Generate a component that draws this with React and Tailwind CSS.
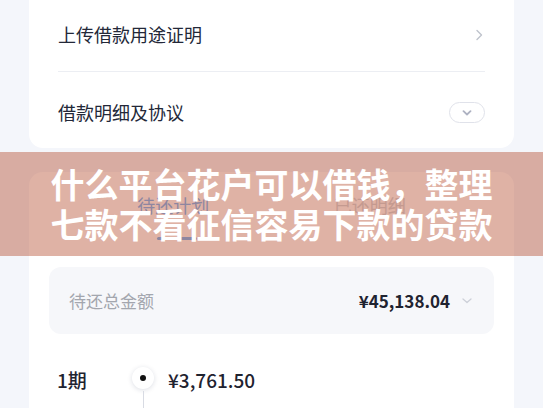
export default function App() {
  return (
    <div className="relative w-full h-[408px] overflow-hidden bg-[#f4f6fb] px-[29px] font-['Noto_Sans_CJK_SC','Noto_Sans',sans-serif]">
      {/* 上方卡片 */}
      <div className="bg-white rounded-b-[14px] px-[29px]">
        <div className="h-[71px] flex items-center justify-between pb-[2px]">
          <span className="text-[18px] text-[#232838]">上传借款用途证明</span>
          <svg width="8" height="12" viewBox="0 0 8 12" className="mr-[2px]">
            <path d="M2 1.5 L6.5 6 L2 10.5" fill="none" stroke="#bfc3cc" strokeWidth="1.4" strokeLinecap="round" strokeLinejoin="round" />
          </svg>
        </div>
        <div className="h-px bg-[#eceef3]" />
        <div className="h-[76px] flex items-center justify-between pt-[5px]">
          <span className="text-[18px] text-[#232838]">借款明细及协议</span>
          <div className="w-[36px] h-[21px] rounded-full border border-[#e0e2ea] flex items-center justify-center">
            <svg width="10" height="6" viewBox="0 0 10 6">
              <path d="M1.5 1.2 L5 4.5 L8.5 1.2" fill="none" stroke="#aeb2c2" strokeWidth="1.8" strokeLinecap="round" strokeLinejoin="round" />
            </svg>
          </div>
        </div>
      </div>

      {/* 还款计划卡片 */}
      <div className="mt-[24px] bg-white rounded-t-[14px] h-[300px]">
        <div className="flex px-[46px] pt-[20px]">
          <div className="flex-1 flex flex-col items-center">
            <span className="text-[18px] leading-[26px] text-[#78b6f7]">待还计划</span>
            <div className="mt-[19px] ml-[8px] w-[40px] h-[3px] rounded-full bg-[#78b6f7]" />
          </div>
          <div className="flex-1 flex flex-col items-center">
            <span className="text-[18px] leading-[26px] text-[#d2d7dc]">已还明细</span>
          </div>
        </div>

        <div className="mx-[20px] mt-[27px] h-[67px] rounded-[12px] bg-[#f6f7fa] flex items-center justify-between pl-[20px] pr-[22px]">
          <span className="text-[17px] text-[#a3a6ae]">待还总金额</span>
          <div className="flex items-center gap-[12px]">
            <span className="text-[17px] font-bold text-[#1f2330]">¥45,138.04</span>
            <svg width="10" height="6" viewBox="0 0 10 6">
              <path d="M1 1 L5 4.5 L9 1" fill="none" stroke="#cdd0d8" strokeWidth="1.3" strokeLinecap="round" strokeLinejoin="round" />
            </svg>
          </div>
        </div>

        <div className="mt-[32px] flex pl-[28px]">
          <div className="w-[75px] flex flex-col">
            <span className="text-[19px] leading-[28px] font-medium text-[#1f2330]">1期</span>
            <span className="mt-[13px] text-[13px] text-[#a3a6ae]">2024/01/20</span>
          </div>
          <div className="w-[22px] flex flex-col items-center">
            <div className="mt-[1px] w-[22px] h-[22px] rounded-full bg-white shadow-[0_1px_5px_rgba(30,40,80,0.15)] flex items-center justify-center">
              <div className="w-[6px] h-[6px] rounded-full bg-[#111]" />
            </div>
            <div className="w-px flex-1 bg-[#d8dbe3] mt-[2px] h-[40px]" />
          </div>
          <div className="ml-[14px] flex flex-col">
            <span className="text-[19px] leading-[28px] font-medium text-[#1f2330]">¥3,761.50</span>
            <div className="mt-[13px] flex gap-[18px] text-[13px] text-[#a3a6ae]">
              <span>本金 ¥3,000.00</span>
              <span>利息 ¥761.50</span>
            </div>
          </div>
        </div>
      </div>

      {/* 标题横幅 */}
      <div className="absolute left-0 right-0 top-[152px] h-[104px] bg-[rgba(175,62,30,0.4)] flex flex-col items-center justify-center">
        <div className="text-white font-bold text-[34px] leading-[40px] text-center">
          <div>什么平台花户可以借钱，整理</div>
          <div>七款不看征信容易下款的贷款</div>
        </div>
      </div>
    </div>
  )
}
